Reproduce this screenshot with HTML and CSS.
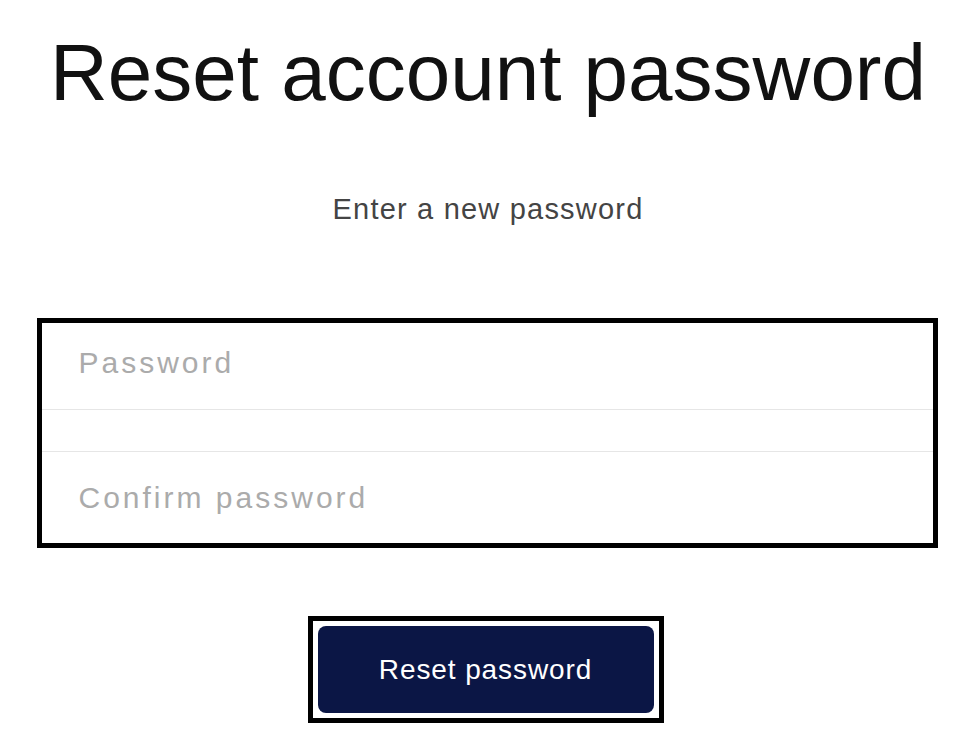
FILE: index.html
```html
<!DOCTYPE html>
<html lang="en">
<head>
<meta charset="utf-8">
<title>Reset account password</title>
<link rel="stylesheet" href="styles.css">
</head>
<body>
<main class="page">
  <h1 class="title">Reset account password</h1>
  <p class="subtitle">Enter a new password</p>
  <form class="form">
    <div class="fields">
      <input class="field field-first" type="password" placeholder="Password">
      <div class="spacer"></div>
      <input class="field field-second" type="password" placeholder="Confirm password">
    </div>
    <div class="btn-ring">
      <button class="btn" type="button">Reset password</button>
    </div>
  </form>
</main>
</body>
</html>
```

FILE: styles.css
```css
* { box-sizing: border-box; }
html, body { margin: 0; padding: 0; background: #fff; }
body { font-family: "Liberation Sans", Arial, Helvetica, sans-serif; }

.page {
  display: flex;
  flex-direction: column;
  align-items: center;
  width: 976px;
}

.title {
  margin: 33px 0 0;
  font-size: 80px;
  line-height: 80px;
  font-weight: 400;
  color: #111;
  text-align: center;
  white-space: nowrap;
}

.subtitle {
  margin: 82px 0 0;
  font-size: 29px;
  line-height: 28px;
  letter-spacing: 1.2px;
  color: #444;
}

.form {
  display: flex;
  flex-direction: column;
  align-items: center;
  margin-top: 95px;
  width: 901px;
  margin-left: -2px;
}

.fields {
  display: flex;
  flex-direction: column;
  width: 901px;
  border: 5px solid #000;
  background: #fff;
}

.field {
  display: block;
  width: 100%;
  border: 0;
  outline: none;
  padding: 0 0 0 37px;
  font-family: "Liberation Sans", Arial, Helvetica, sans-serif;
  font-size: 30px;
  letter-spacing: 3px;
  color: #222;
  background: #fff;
}
.field::placeholder { color: #ababab; opacity: 1; }

.field-first {
  height: 87px;
  border-bottom: 1px solid #e6e6e6;
  padding-bottom: 6px;
}
.spacer { height: 41px; }
.field-second {
  height: 92px;
  border-top: 1px solid #e6e6e6;
}

.btn-ring {
  margin-top: 68px;
  margin-left: -3px;
  border: 5px solid #000;
  padding: 5px;
  background: #fff;
}

.btn {
  display: block;
  width: 336px;
  height: 87px;
  border: 0;
  border-radius: 8px;
  background: #0b1645;
  color: #fff;
  font-family: "Liberation Sans", Arial, Helvetica, sans-serif;
  font-size: 28px;
  letter-spacing: 0.9px;
  cursor: pointer;
}
```
